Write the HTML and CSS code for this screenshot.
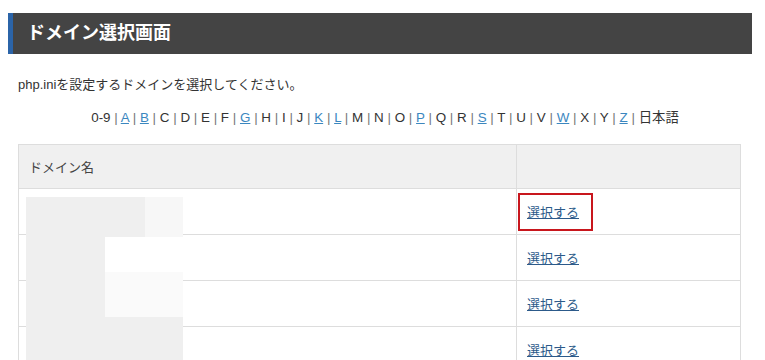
FILE: index.html
```html
<!DOCTYPE html>
<html lang="ja">
<head>
<meta charset="utf-8">
<title>ドメイン選択画面</title>
<link rel="stylesheet" href="styles.css">
</head>
<body>
<div class="page">
  <h1 class="title">ドメイン選択画面</h1>
  <div class="content">
    <p class="intro">php.iniを設定するドメインを選択してください。</p>
    <p class="alpha">0-9 <span class="sep">|</span> <a href="#">A</a> <span class="sep">|</span> <a href="#">B</a> <span class="sep">|</span> C <span class="sep">|</span> D <span class="sep">|</span> E <span class="sep">|</span> F <span class="sep">|</span> <a href="#">G</a> <span class="sep">|</span> H <span class="sep">|</span> I <span class="sep">|</span> J <span class="sep">|</span> <a href="#">K</a> <span class="sep">|</span> <a href="#">L</a> <span class="sep">|</span> M <span class="sep">|</span> N <span class="sep">|</span> O <span class="sep">|</span> <a href="#">P</a> <span class="sep">|</span> Q <span class="sep">|</span> R <span class="sep">|</span> <a href="#">S</a> <span class="sep">|</span> T <span class="sep">|</span> U <span class="sep">|</span> V <span class="sep">|</span> <a href="#">W</a> <span class="sep">|</span> X <span class="sep">|</span> Y <span class="sep">|</span> <a href="#">Z</a> <span class="sep">|</span> 日本語</p>
    <div class="table-wrap">
      <table class="domains">
        <thead>
          <tr><th class="col-name">ドメイン名</th><th class="col-act"></th></tr>
        </thead>
        <tbody>
          <tr><td></td><td><a href="#" class="sel highlight">選択する</a></td></tr>
          <tr><td></td><td><a href="#" class="sel">選択する</a></td></tr>
          <tr><td></td><td><a href="#" class="sel">選択する</a></td></tr>
          <tr><td></td><td><a href="#" class="sel">選択する</a></td></tr>
        </tbody>
      </table>
      <div class="redact r1"></div>
      <div class="redact r2"></div>
      <div class="redact r3"></div>
      <div class="redact r4"></div>
      <div class="redact r5"></div>
    </div>
  </div>
</div>
</body>
</html>
```
FILE: styles.css
```css
html, body {
  margin: 0;
  padding: 0;
  background: #fff;
}
body {
  font-family: "Liberation Sans", Arial, "Noto Sans CJK JP", sans-serif;
  color: #333;
  font-size: 13px;
}
.page {
  width: 744px;
  margin: 13px 0 0 8px;
}
.title {
  margin: 0;
  height: 41px;
  box-sizing: border-box;
  background: #444;
  border-left: 5px solid #2b64a8;
  color: #fff;
  font-size: 18px;
  font-weight: bold;
  line-height: 41px;
  padding-left: 14px;
  font-family: "Liberation Sans", Arial, "Noto Sans CJK JP", sans-serif;
}
.content {
  padding-left: 10px;
}
.intro {
  margin: 23px 0 0;
  line-height: 16px;
}
.alpha {
  margin: 17px 0 0;
  text-align: center;
  line-height: 16px;
  font-size: 13.4px;
  color: #333;
}
.alpha a {
  color: #3b87bf;
  text-decoration: underline;
}
.alpha .sep {
  color: #777;
}
.table-wrap {
  position: relative;
  margin-top: 18px;
  width: 723px;
}
.domains {
  width: 723px;
  border-collapse: collapse;
  table-layout: fixed;
}
.domains th, .domains td {
  border: 1px solid #ddd;
  text-align: left;
  padding: 0 0 0 10px;
  font-weight: normal;
}
.domains th {
  background: #f0f0f0;
  height: 43px;
  color: #444;
}
.domains td {
  height: 45px;
}
.col-name { width: 487px; }
.sel {
  color: #2c5a8a;
  text-decoration: underline;
}
.highlight {
  position: relative;
}
.highlight::after {
  content: "";
  position: absolute;
  left: -9px;
  right: -14px;
  top: -12px;
  bottom: -11px;
  border: 2px solid #c8161d;
}
.redact {
  position: absolute;
}
.r1 { left: 8px; top: 53px; width: 119px; height: 40px; background: #efefef; }
.r2 { left: 127px; top: 53px; width: 38px; height: 40px; background: #f7f7f7; }
.r3 { left: 8px; top: 93px; width: 79px; height: 80px; background: #efefef; }
.r4 { left: 87px; top: 128px; width: 78px; height: 45px; background: #fafafa; }
.r5 { left: 8px; top: 173px; width: 157px; height: 44px; background: #efefef; }
```
